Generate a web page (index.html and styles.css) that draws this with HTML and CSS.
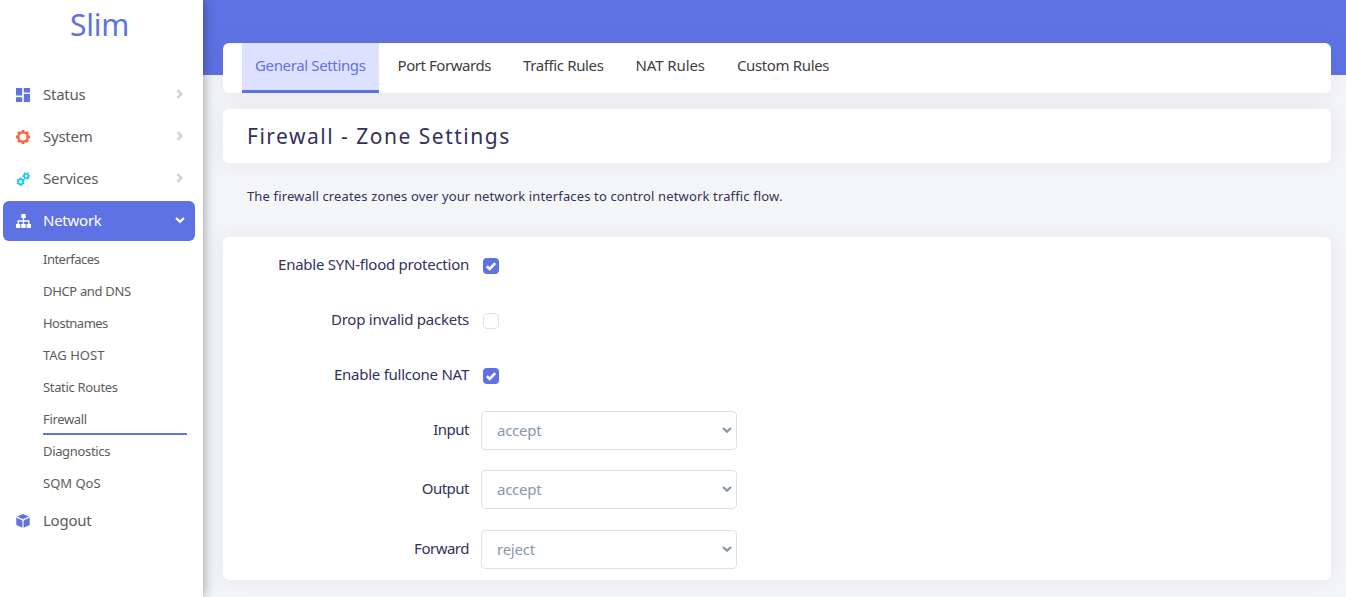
FILE: index.html
```
<!DOCTYPE html>
<html lang="en">
<head>
<meta charset="utf-8">
<title>Slim - Firewall</title>
<link rel="stylesheet" href="styles.css">
</head>
<body>
<svg class="defs" width="0" height="0">
  <symbol id="chev" viewBox="0 0 10 10"><path d="M2.500 1.200 6.300 5 2.500 8.800" fill="none" stroke="currentColor" stroke-width="2.600"/></symbol>
  <symbol id="down" viewBox="0 0 10 10"><path d="M1 3 5 6.600 9 3" fill="none" stroke="currentColor" stroke-width="2.300"/></symbol>
  <symbol id="check" viewBox="0 0 16 16"><path d="M3.800 8.200 6.700 10.900 12.200 5.200" fill="none" stroke="#fff" stroke-width="2.600"/></symbol>
</svg>
<div class="app">
  <aside class="sidebar">
    <a class="brand">Slim</a>
    <nav class="menu">
      <a class="item"><svg class="icon" viewBox="0 0 14 14" fill="#5e72e4"><path d="M0 0h6.200v7.600H0zM7.800 0H14v4.400H7.800zM0 9.200h6.200V14H0zM7.800 6H14v8H7.800z"/></svg><span class="label">Status</span><svg class="arrow"><use href="#chev"/></svg></a>
      <a class="item"><svg class="icon" viewBox="0 0 14 14" fill="none" stroke="#fb6340"><circle cx="7" cy="7" r="4.700" stroke-width="2.300"/><path stroke-width="2.800" d="M7 0v2M7 12v2M0 7h2M12 7h2M2.050 2.050l1.400 1.400M10.550 10.550l1.400 1.400M2.050 11.950l1.400-1.400M10.550 3.450l1.400-1.400"/></svg><span class="label">System</span><svg class="arrow"><use href="#chev"/></svg></a>
      <a class="item"><svg class="icon" viewBox="0 0 14 14" fill="none" stroke="#11cdef"><circle cx="4.600" cy="9.800" r="2.600" stroke-width="1.700"/><path stroke-width="1.700" d="M4.600 5.600v1.500M4.600 12.500V14M1 7.700l1.300.8M6.900 11.100l1.300.8M1 11.900l1.300-.8M6.900 8.500l1.300-.8"/><circle cx="10.200" cy="4" r="2.200" stroke-width="1.600"/><path stroke-width="1.600" d="M8.200.6l.7 1.100M12.200.6l-.7 1.100M6.300 4h1.500M12.600 4H14M8.200 7.400l.7-1.100M12.200 7.400l-.7-1.100"/></svg><span class="label">Services</span><svg class="arrow"><use href="#chev"/></svg></a>
      <a class="item active"><svg class="icon wide" viewBox="0 0 15 14" fill="#fff"><path d="M5.300 0h4.400v4H5.300zM0 10h4.400v4H0zM5.300 10h4.400v4H5.300zM10.600 10H15v4h-4.400z"/><path d="M7.500 4v6M2.200 10V7h10.600v3" fill="none" stroke="#fff" stroke-width="1.300"/></svg><span class="label">Network</span><svg class="arrow"><use href="#down"/></svg></a>
    </nav>
    <nav class="submenu">
      <a class="tight">Interfaces</a>
      <a>DHCP and DNS</a>
      <a class="tight">Hostnames</a>
      <a class="caps">TAG HOST</a>
      <a>Static Routes</a>
      <a class="current">Firewall</a>
      <a>Diagnostics</a>
      <a class="caps">SQM QoS</a>
    </nav>
    <a class="item logout"><svg class="icon" viewBox="0 0 14 14" fill="#5e72e4"><path d="M7 0l5.800 2.500L7 5.200 1.200 2.500zM.3 3.500l6.100 2.900v7.400L.3 10.900zM13.700 3.500v7.400l-6.100 2.900V6.400z"/></svg><span class="label">Logout</span></a>
  </aside>
  <main class="content">
    <nav class="card tabs">
      <a class="tab selected">General Settings</a>
      <a class="tab port">Port Forwards</a>
      <a class="tab">Traffic Rules</a>
      <a class="tab nat">NAT Rules</a>
      <a class="tab">Custom Rules</a>
    </nav>
    <h2 class="card title">Firewall - Zone Settings</h2>
    <p class="descr">The firewall creates zones over your network interfaces to control network traffic flow.</p>
    <section class="card form">
      <div class="row"><label>Enable SYN-flood protection</label><span class="box checked"><svg viewBox="0 0 16 16"><use href="#check"/></svg></span></div>
      <div class="row"><label>Drop invalid packets</label><span class="box"></span></div>
      <div class="row"><label>Enable fullcone NAT</label><span class="box checked"><svg viewBox="0 0 16 16"><use href="#check"/></svg></span></div>
      <div class="row choice"><label>Input</label><div class="select">accept<svg><use href="#down"/></svg></div></div>
      <div class="row choice"><label>Output</label><div class="select">accept<svg><use href="#down"/></svg></div></div>
      <div class="row choice"><label>Forward</label><div class="select">reject<svg><use href="#down"/></svg></div></div>
    </section>
  </main>
</div>
</body>
</html>
```
FILE: styles.css
```
* { box-sizing: border-box; }
body {
  margin: 0;
  height: 597px;
  overflow: hidden;
  background: #f4f5f7;
  color: #32325d;
  font: 15px/22px "Noto Sans", "Open Sans", sans-serif;
}
.defs { display: block; height: 0; }
.app { display: flex; height: 597px; }
.sidebar {
  position: relative;
  z-index: 1;
  width: 203px;
  flex: none;
  background: #fff;
  box-shadow: 0 0 12px 0 rgba(0, 0, 0, .4);
}
.brand {
  display: block;
  height: 75px;
  padding-right: 4px;
  text-align: center;
  color: #5e72e4;
  font-size: 30px;
  line-height: 50px;
  letter-spacing: -.3px;
}
.menu { display: grid; gap: 2px; }
.item {
  display: flex;
  align-items: center;
  height: 40px;
  margin: 0 8px 0 3px;
  padding: 0 10px 0 13px;
  border-radius: 6px;
  color: #5c5c5c;
}
.label { padding-bottom: 2px; letter-spacing: -.25px; }
.icon { width: 14px; height: 14px; flex: none; margin: 0 13.500px 0 -.5px; }
.icon.wide { width: 15px; margin: 0 12.500px 0 -.5px; }
.arrow { width: 10px; height: 10px; margin: -2px 0 0 auto; color: #ced4da; }
.active { background: #5e72e4; color: #fff; }
.active .arrow { color: #fff; }
.submenu {
  padding: 3px 16px 0 43px;
  font-size: 13px;
  color: #5c5c5c;
  letter-spacing: -.34px;
}
.submenu a { display: block; height: 32px; line-height: 31px; }
.submenu .tight { letter-spacing: -.52px; }
.submenu .caps { letter-spacing: 0; }
.submenu .current { border-bottom: 2px solid #5e72e4; margin-bottom: 1px; height: 31px; }
.logout { margin-top: 1px; }
.content {
  flex: 1;
  padding: 43px 15px 0 20px;
  background: linear-gradient(#5e72e4 75px, #f4f5f7 75px);
}
.card {
  background: #fff;
  border-radius: 6px;
  box-shadow: 0 0 20px rgba(60, 70, 80, .08);
}
.tabs { display: flex; gap: 6px; height: 50px; padding-left: 19px; color: #404040; }
.tab { padding: 0 13px; line-height: 44px; white-space: nowrap; letter-spacing: -.36px; }
.tab.port { letter-spacing: -.45px; }
.tab.nat { letter-spacing: -.1px; }
.selected { color: #5e72e4; background: #dce1ff; border-bottom: 3px solid #5e72e4; }
.title {
  height: 54px;
  margin: 16px 0 0;
  padding-left: 24px;
  font-size: 21px;
  font-weight: 400;
  line-height: 55px;
  letter-spacing: 1.500px;
}
.descr { margin: 0; height: 74px; padding-left: 24px; font-size: 13px; line-height: 67px; letter-spacing: .14px; }
.form { height: 343px; padding-top: 9px; }
.row { display: flex; height: 55px; line-height: 36px; }
.row label { width: 246px; margin-right: 14px; text-align: right; letter-spacing: -.25px; }
.box { width: 16px; height: 16px; margin-top: 12px; border: 1px solid #dee2e6; border-radius: 4px; }
.checked { border: 0; background: #5e72e4; }
.checked svg { display: block; width: 16px; height: 16px; }
.choice { height: 59.400px; }
.choice label { margin-right: 12px; letter-spacing: -.5px; }
.select {
  display: flex;
  align-items: center;
  justify-content: space-between;
  width: 256px;
  height: 39px;
  padding: 0 4px 1px 15px;
  border: 1px solid #dee2e6;
  border-radius: 4px;
  color: #8898aa;
  letter-spacing: -.25px;
}
.select svg { width: 10px; height: 10px; }
```
